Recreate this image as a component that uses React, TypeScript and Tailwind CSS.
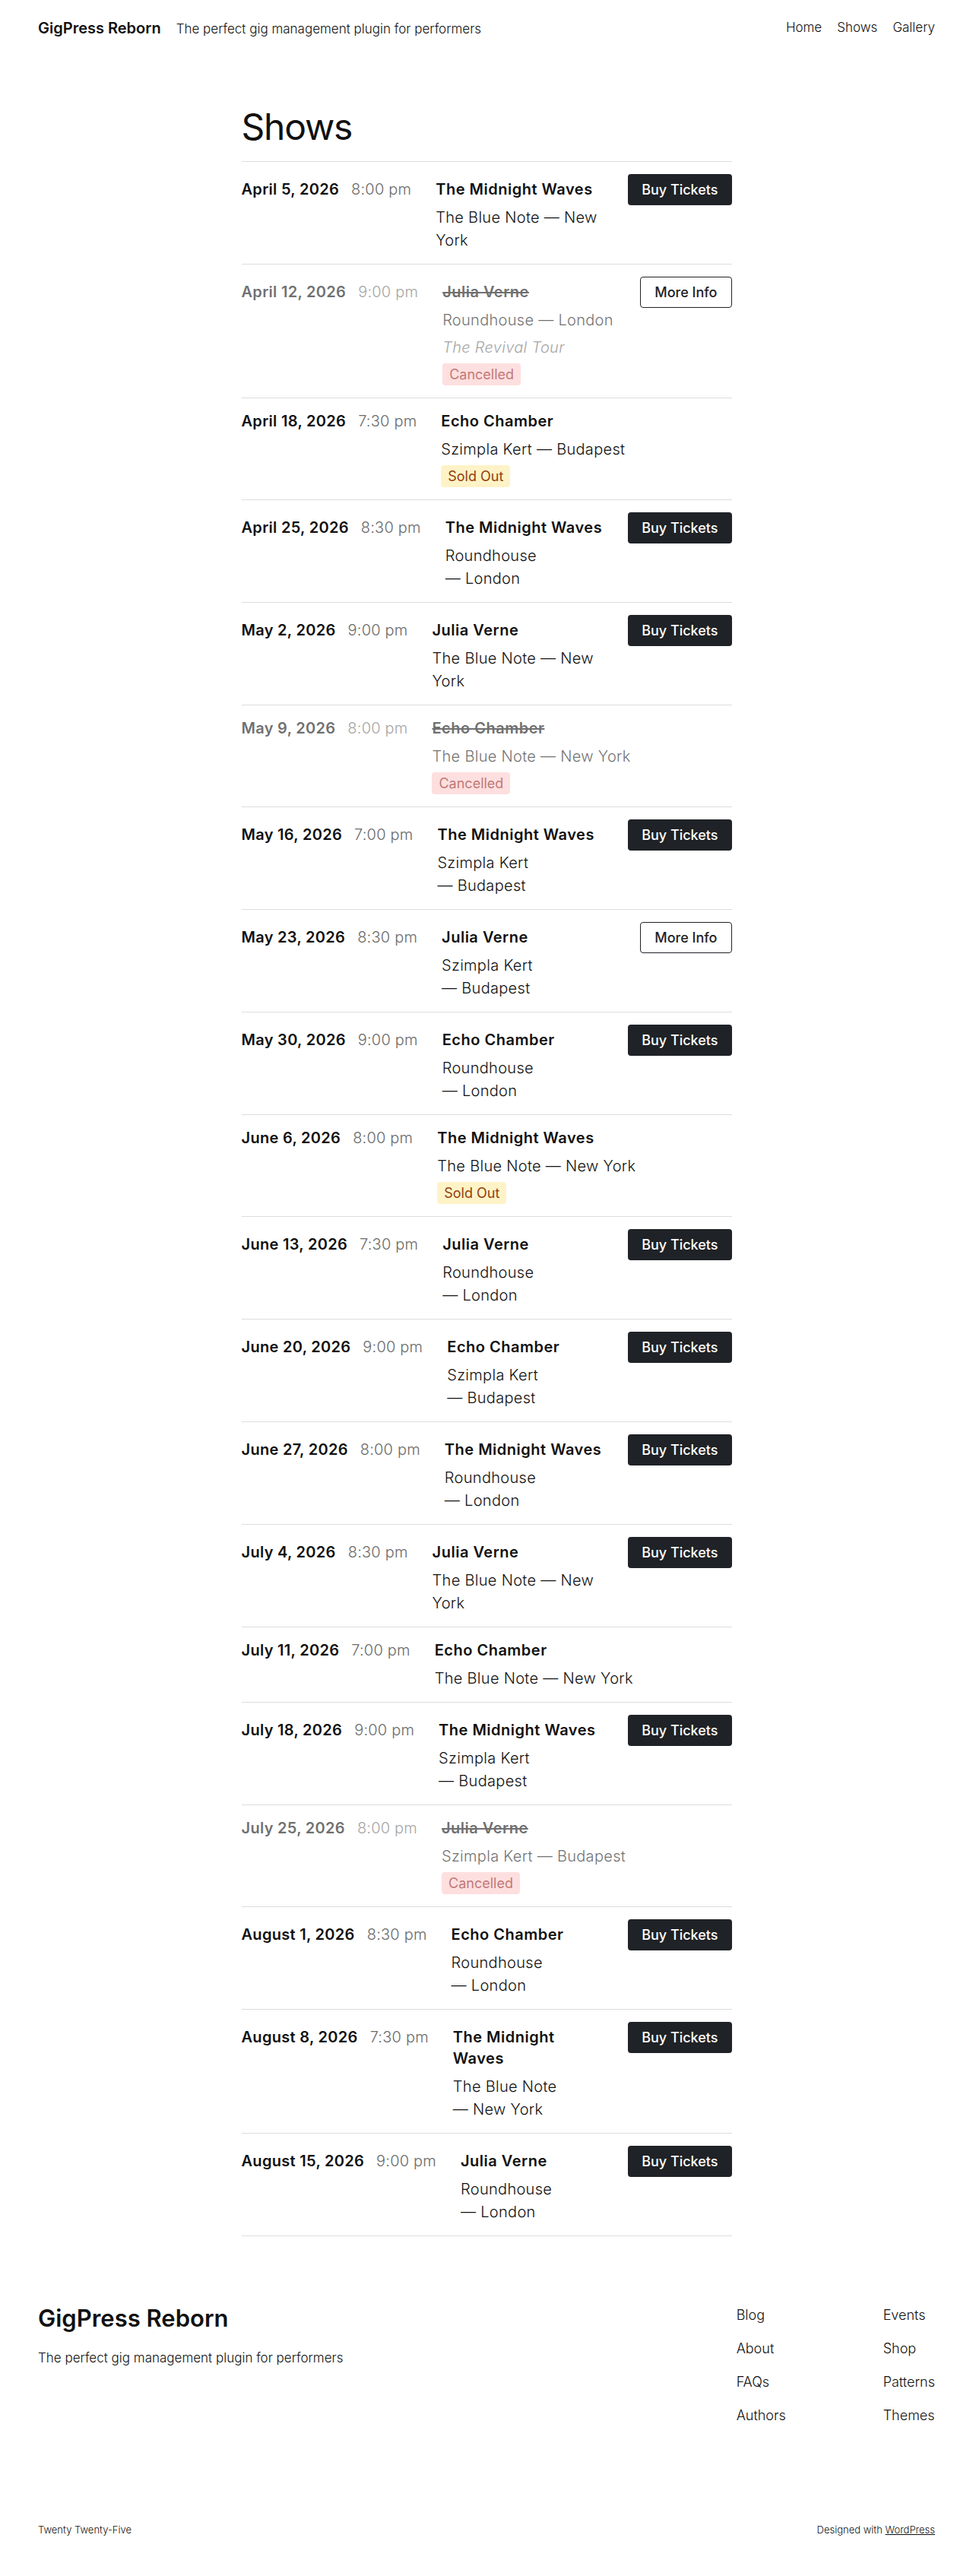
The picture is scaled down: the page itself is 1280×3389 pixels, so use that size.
type Show = {
  date: string;
  time: string;
  artist: string;
  venue: string;
  city: string;
  tour?: string;
  status?: "cancelled" | "soldout";
  action?: "buy" | "info";
};

const shows: Show[] = [
  { date: "April 5, 2026", time: "8:00 pm", artist: "The Midnight Waves", venue: "The Blue Note", city: "New York", action: "buy" },
  { date: "April 12, 2026", time: "9:00 pm", artist: "Julia Verne", venue: "Roundhouse", city: "London", tour: "The Revival Tour", status: "cancelled", action: "info" },
  { date: "April 18, 2026", time: "7:30 pm", artist: "Echo Chamber", venue: "Szimpla Kert", city: "Budapest", status: "soldout" },
  { date: "April 25, 2026", time: "8:30 pm", artist: "The Midnight Waves", venue: "Roundhouse", city: "London", action: "buy" },
  { date: "May 2, 2026", time: "9:00 pm", artist: "Julia Verne", venue: "The Blue Note", city: "New York", action: "buy" },
  { date: "May 9, 2026", time: "8:00 pm", artist: "Echo Chamber", venue: "The Blue Note", city: "New York", status: "cancelled" },
  { date: "May 16, 2026", time: "7:00 pm", artist: "The Midnight Waves", venue: "Szimpla Kert", city: "Budapest", action: "buy" },
  { date: "May 23, 2026", time: "8:30 pm", artist: "Julia Verne", venue: "Szimpla Kert", city: "Budapest", action: "info" },
  { date: "May 30, 2026", time: "9:00 pm", artist: "Echo Chamber", venue: "Roundhouse", city: "London", action: "buy" },
  { date: "June 6, 2026", time: "8:00 pm", artist: "The Midnight Waves", venue: "The Blue Note", city: "New York", status: "soldout" },
  { date: "June 13, 2026", time: "7:30 pm", artist: "Julia Verne", venue: "Roundhouse", city: "London", action: "buy" },
  { date: "June 20, 2026", time: "9:00 pm", artist: "Echo Chamber", venue: "Szimpla Kert", city: "Budapest", action: "buy" },
  { date: "June 27, 2026", time: "8:00 pm", artist: "The Midnight Waves", venue: "Roundhouse", city: "London", action: "buy" },
  { date: "July 4, 2026", time: "8:30 pm", artist: "Julia Verne", venue: "The Blue Note", city: "New York", action: "buy" },
  { date: "July 11, 2026", time: "7:00 pm", artist: "Echo Chamber", venue: "The Blue Note", city: "New York" },
  { date: "July 18, 2026", time: "9:00 pm", artist: "The Midnight Waves", venue: "Szimpla Kert", city: "Budapest", action: "buy" },
  { date: "July 25, 2026", time: "8:00 pm", artist: "Julia Verne", venue: "Szimpla Kert", city: "Budapest", status: "cancelled" },
  { date: "August 1, 2026", time: "8:30 pm", artist: "Echo Chamber", venue: "Roundhouse", city: "London", action: "buy" },
  { date: "August 8, 2026", time: "7:30 pm", artist: "The Midnight Waves", venue: "The Blue Note", city: "New York", action: "buy" },
  { date: "August 15, 2026", time: "9:00 pm", artist: "Julia Verne", venue: "Roundhouse", city: "London", action: "buy" },
];

const ShowRow = ({ show }: { show: Show }) => {
  const cancelled = show.status === "cancelled";
  // nbsp keeps the city glued to its dash when the line wraps
  const location = `${show.venue} —\u00A0${show.city}`;

  return (
    <li className="flex items-baseline gap-8 py-4 border-b border-[#dddddd]">
      {/* Date + time */}
      <div className={`flex items-baseline gap-4 shrink-0 ${cancelled ? "opacity-60" : ""}`}>
        <span className="text-[20px] leading-7 font-semibold tracking-[0.3px]">{show.date}</span>
        <span className="text-[20px] leading-7 font-light tracking-[0.2px] text-[#6b6b6b]">{show.time}</span>
      </div>

      {/* Artist, venue, extras */}
      <div className={`flex-1 min-w-0 ${cancelled ? "opacity-60" : ""}`}>
        <div className={`text-[20px] leading-7 font-semibold tracking-[0.5px] mb-2 ${cancelled ? "line-through" : ""}`}>
          {show.artist}
        </div>
        <div className="text-[20px] leading-[30px] font-light tracking-[0.3px]">{location}</div>
        {show.tour && (
          <div className="mt-[6px] text-[20px] leading-[30px] font-light italic tracking-[0.3px] text-[#6b6b6b]">
            {show.tour}
          </div>
        )}
        {cancelled && (
          <span className="block w-fit mt-[6px] px-[9px] py-[2px] rounded bg-[#fecaca] text-[#991b1b] text-[18px] leading-[25px]">
            Cancelled
          </span>
        )}
        {show.status === "soldout" && (
          <span className="block w-fit mt-[6px] px-[9px] py-[2px] rounded bg-[#fef3c7] text-[#92400e] text-[18px] leading-[25px]">
            Sold Out
          </span>
        )}
      </div>

      {show.action === "buy" && (
        <button className="shrink-0 h-[41px] px-[18px] rounded bg-[#1f2226] text-white text-[18px] font-medium">
          Buy Tickets
        </button>
      )}
      {show.action === "info" && (
        <button className="shrink-0 h-[41px] px-[18px] rounded border border-[#1f2226] bg-white text-[#1f2226] text-[18px] font-medium">
          More Info
        </button>
      )}
    </li>
  );
};

export default function App() {
  return (
    <div className="min-h-screen bg-white text-[#111111] font-['Inter','Liberation_Sans',sans-serif]">
      {/* Header */}
      <header className="h-[74px] px-[50px] flex items-center justify-between">
        <div className="flex items-baseline gap-5">
          <span className="text-[20px] font-semibold">GigPress Reborn</span>
          <span className="text-[17px] font-light">The perfect gig management plugin for performers</span>
        </div>
        <nav className="flex gap-5 text-[17px] font-light">
          <a>Home</a>
          <a>Shows</a>
          <a>Gallery</a>
        </nav>
      </header>

      {/* Shows list */}
      <main className="w-[645px] mx-auto pt-16">
        <h1 className="text-[48px] leading-[1.2] font-normal tracking-tight mb-4">Shows</h1>
        <ul className="border-t border-[#dddddd]">
          {shows.map((s) => (
            <ShowRow key={s.date} show={s} />
          ))}
        </ul>
      </main>

      {/* Footer */}
      <footer className="px-[50px] pt-[90px] pb-[49px]">
        <div className="flex justify-between">
          <div>
            <div className="text-[31px] leading-9 font-semibold">GigPress Reborn</div>
            <p className="mt-5 text-[17px] leading-7 font-light">The perfect gig management plugin for performers</p>
          </div>
          <div className="grid grid-cols-[193px_auto] text-[18px] leading-7 font-light">
            <div className="flex flex-col gap-4">
              <a>Blog</a>
              <a>About</a>
              <a>FAQs</a>
              <a>Authors</a>
            </div>
            <div className="flex flex-col gap-4">
              <a>Events</a>
              <a>Shop</a>
              <a>Patterns</a>
              <a>Themes</a>
            </div>
          </div>
        </div>
        <div className="mt-[126px] flex justify-between text-[13px] leading-5 font-light">
          <span>Twenty Twenty-Five</span>
          <span>
            Designed with <a className="underline">WordPress</a>
          </span>
        </div>
      </footer>
    </div>
  );
}
